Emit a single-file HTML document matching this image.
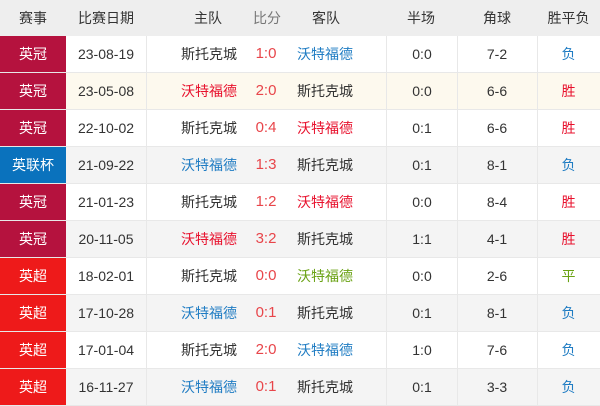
<!DOCTYPE html><html><head><meta charset="utf-8"><style>
body{margin:0;width:600px;height:400px;overflow:hidden;background:#fff;font-family:"Liberation Sans","Noto Sans CJK SC",sans-serif;font-size:14px;color:#333}
.r{position:absolute;left:0;width:600px;height:36px;border-bottom:1px solid #e8e8e8}
.r span{position:absolute;top:0;line-height:36px;white-space:nowrap}
.h{top:0;background:#eee;border:none;height:36px}
.lg{left:0;width:66px;height:100%;color:#fff;text-align:center}
.dt{left:66px;width:80px;text-align:center;border-right:1px solid #e8e8e8;height:100%}
.ho{right:363px;text-align:right}
.sc{left:250px;width:32px;text-align:center;color:#e8454a;font-size:15px}
.aw{left:297px}
.hf{left:386px;width:70px;text-align:center;border-left:1px solid #e8e8e8;border-right:1px solid #e8e8e8;height:100%}
.co{left:457px;width:80px;text-align:center;border-right:1px solid #e8e8e8;height:100%}
.rs{left:537px;width:63px;text-align:center}
.b{color:#1f7cc3}.rd{color:#e8112d}.g{color:#6aa214}
.c1{background:#b5123e}.c2{background:#0a72bd}.c3{background:#ee1a1a}
.w{background:#fff}.gr{background:#f4f4f4}.cr{background:#fdf9ee}
</style></head><body>
<div class="r h"><span class="lg" style="color:#333">赛事</span><span class="dt" style="border:none">比赛日期</span><span class="ho" style="right:378px">主队</span><span class="sc" style="color:#777;font-size:14px;left:251px">比分</span><span class="aw" style="left:312px">客队</span><span class="hf" style="border:none">半场</span><span class="co" style="border:none">角球</span><span class="rs">胜平负</span></div>

<div class="r w" style="top:36px"><span class="lg c1">英冠</span><span class="dt">23-08-19</span><span class="ho">斯托克城</span><span class="sc">1:0</span><span class="aw b">沃特福德</span><span class="hf">0:0</span><span class="co">7-2</span><span class="rs b">负</span></div>
<div class="r cr" style="top:73px"><span class="lg c1">英冠</span><span class="dt">23-05-08</span><span class="ho rd">沃特福德</span><span class="sc">2:0</span><span class="aw">斯托克城</span><span class="hf">0:0</span><span class="co">6-6</span><span class="rs rd">胜</span></div>
<div class="r w" style="top:110px"><span class="lg c1">英冠</span><span class="dt">22-10-02</span><span class="ho">斯托克城</span><span class="sc">0:4</span><span class="aw rd">沃特福德</span><span class="hf">0:1</span><span class="co">6-6</span><span class="rs rd">胜</span></div>
<div class="r gr" style="top:147px"><span class="lg c2">英联杯</span><span class="dt">21-09-22</span><span class="ho b">沃特福德</span><span class="sc">1:3</span><span class="aw">斯托克城</span><span class="hf">0:1</span><span class="co">8-1</span><span class="rs b">负</span></div>
<div class="r w" style="top:184px"><span class="lg c1">英冠</span><span class="dt">21-01-23</span><span class="ho">斯托克城</span><span class="sc">1:2</span><span class="aw rd">沃特福德</span><span class="hf">0:0</span><span class="co">8-4</span><span class="rs rd">胜</span></div>
<div class="r gr" style="top:221px"><span class="lg c1">英冠</span><span class="dt">20-11-05</span><span class="ho rd">沃特福德</span><span class="sc">3:2</span><span class="aw">斯托克城</span><span class="hf">1:1</span><span class="co">4-1</span><span class="rs rd">胜</span></div>
<div class="r w" style="top:258px"><span class="lg c3">英超</span><span class="dt">18-02-01</span><span class="ho">斯托克城</span><span class="sc">0:0</span><span class="aw g">沃特福德</span><span class="hf">0:0</span><span class="co">2-6</span><span class="rs g">平</span></div>
<div class="r gr" style="top:295px"><span class="lg c3">英超</span><span class="dt">17-10-28</span><span class="ho b">沃特福德</span><span class="sc">0:1</span><span class="aw">斯托克城</span><span class="hf">0:1</span><span class="co">8-1</span><span class="rs b">负</span></div>
<div class="r w" style="top:332px"><span class="lg c3">英超</span><span class="dt">17-01-04</span><span class="ho">斯托克城</span><span class="sc">2:0</span><span class="aw b">沃特福德</span><span class="hf">1:0</span><span class="co">7-6</span><span class="rs b">负</span></div>
<div class="r gr" style="top:369px"><span class="lg c3">英超</span><span class="dt">16-11-27</span><span class="ho b">沃特福德</span><span class="sc">0:1</span><span class="aw">斯托克城</span><span class="hf">0:1</span><span class="co">3-3</span><span class="rs b">负</span></div>
</body></html>
